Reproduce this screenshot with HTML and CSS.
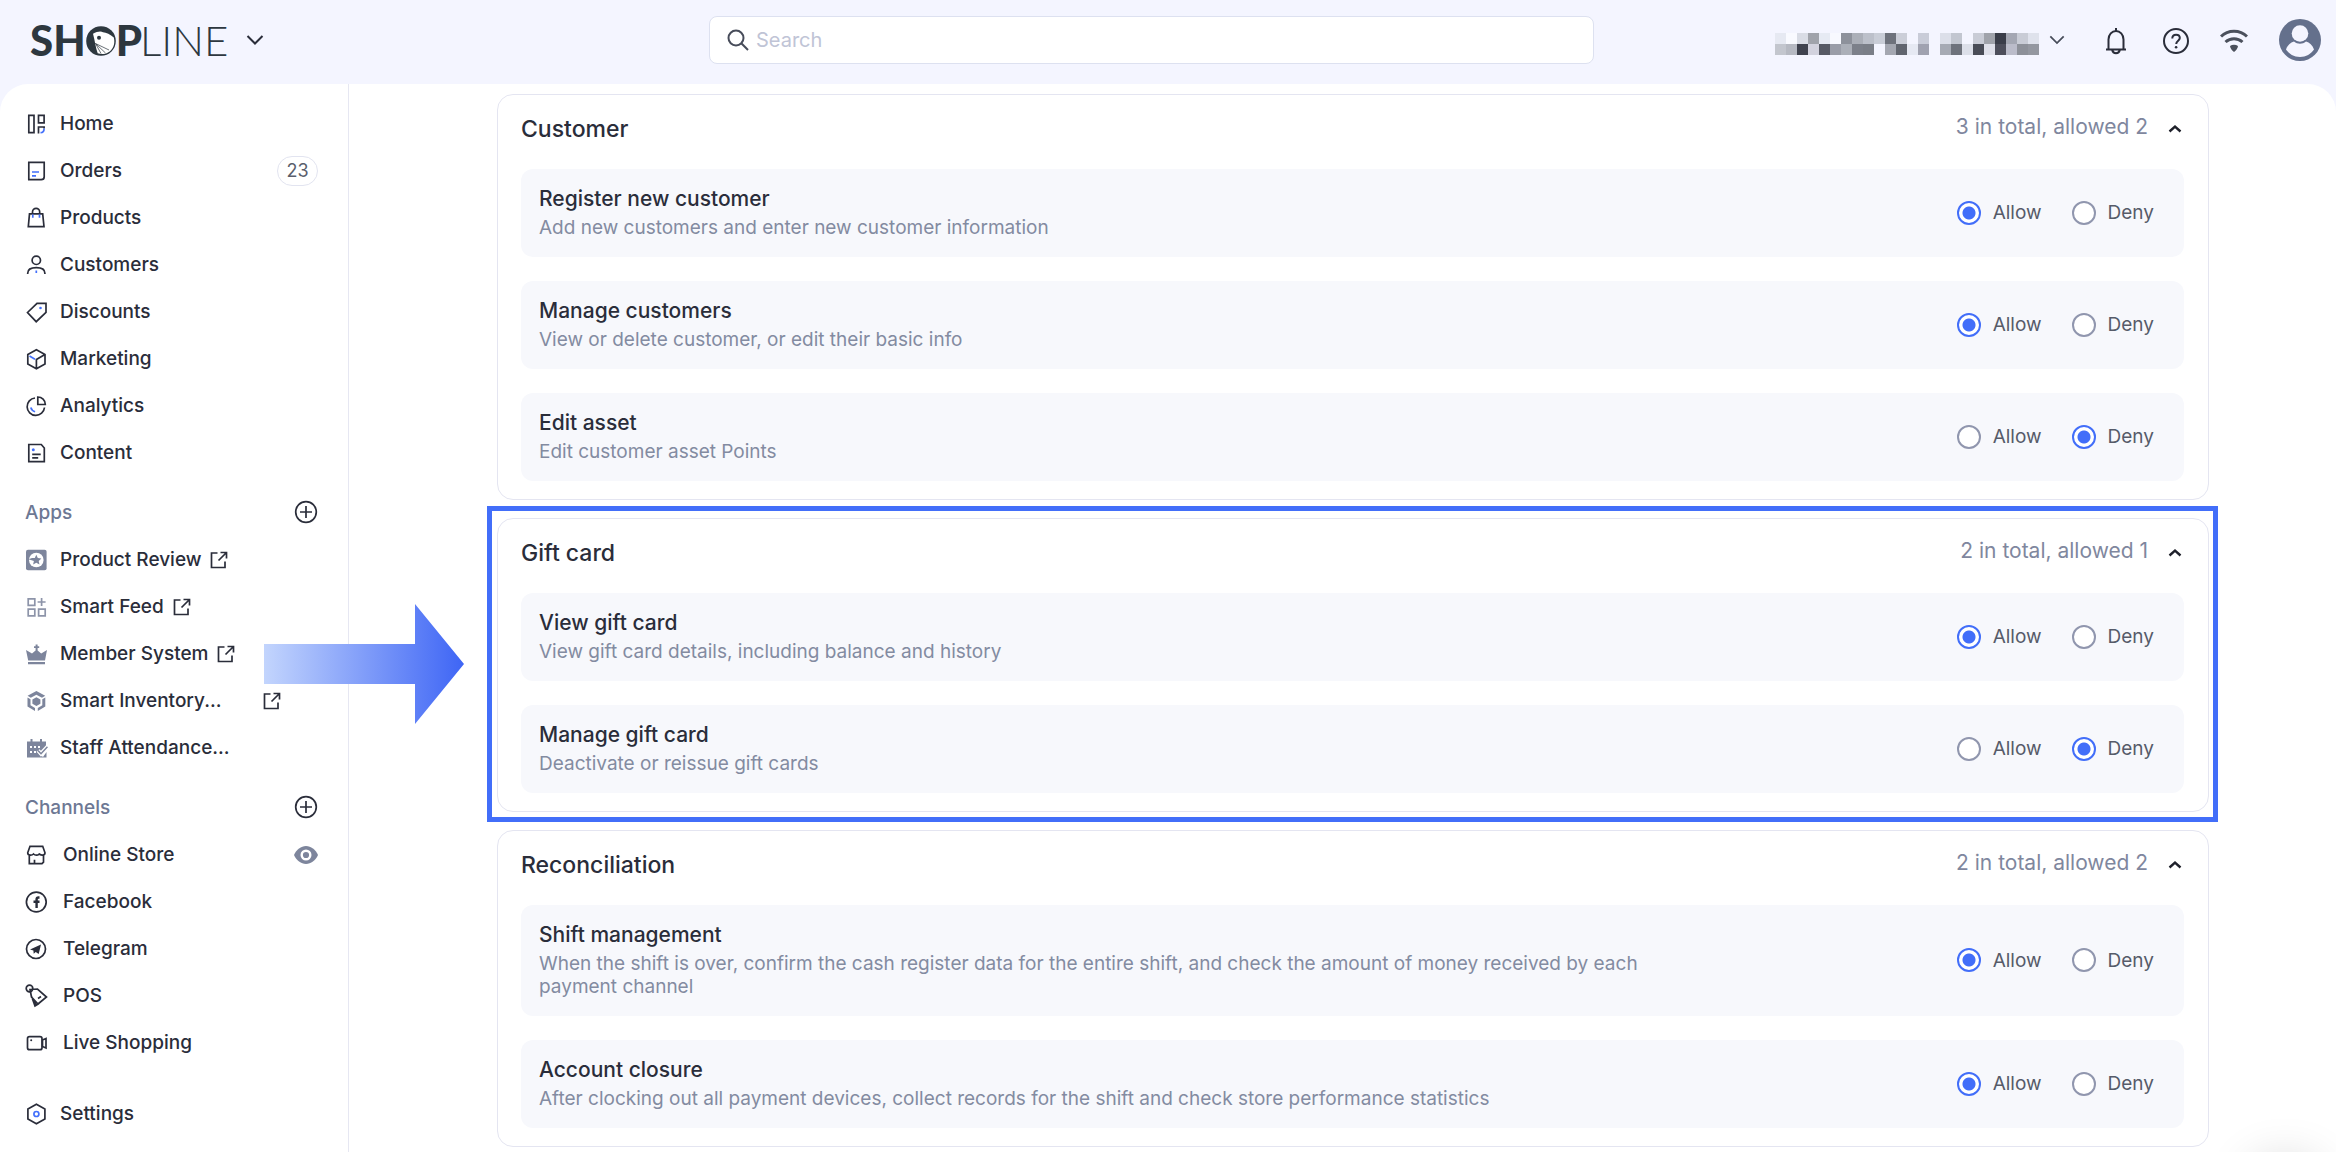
FILE: index.html
```html
<!DOCTYPE html>
<html lang="en">
<head>
    <meta charset="UTF-8">
    <meta name="viewport" content="width=device-width, initial-scale=1.0">
    <title>Staff Permissions</title>
    <link rel="stylesheet" href="styles.css">
</head>
<body>
<!-- shared icons -->
<svg class="sprite" aria-hidden="true">
    <symbol id="icon-external" viewBox="0 0 18 18">
        <path d="M7.500 2H1.500v14.500h13.500v-6M10.500 1.500h6v6M16 2L8.500 9.500"/>
    </symbol>
    <symbol id="icon-plus" viewBox="0 0 24 24">
        <circle cx="12" cy="12" r="10.300"/>
        <path d="M12 6v12M6 12h12"/>
    </symbol>
    <symbol id="icon-up" viewBox="0 0 14 10">
        <path d="M1.500 7.500L7 2.500l5.500 5"/>
    </symbol>
    <symbol id="icon-down" viewBox="0 0 18 12">
        <path d="M1.500 2L9 9.500 16.500 2"/>
    </symbol>
</svg>

<header class="topbar">
    <button class="brand" aria-label="SHOPLINE store menu">
        <span class="logo">
            <span class="logo-bold">SH</span>
            <svg class="logo-bird" viewBox="0 0 30 30">
                <circle cx="15" cy="15" r="14.800" fill="#2d373f"/>
                <path d="M7 7.800C11 5.500 15 5 17 6.300c3 .2 7.500 2.200 10.800 5.200C29.500 18 27 24 22 26.500c-3 1.700-7 2-10.300.8C9.500 21.500 9 15 7 7.800z" fill="#fff"/>
                <circle cx="13" cy="11.800" r="2" fill="#2d373f"/>
                <path d="M9.500 17.500L23 24M9.500 17.500l10 9.500M9.500 17.500l5.500 10" stroke="#2d373f" stroke-width=".7" fill="none"/>
            </svg>
            <span class="logo-bold">P</span><span class="logo-light">LINE</span>
        </span>
        <svg class="chevron" width="18" height="12"><use href="#icon-down"/></svg>
    </button>

    <div class="search">
        <svg class="search-icon" viewBox="0 0 22 22">
            <circle cx="9" cy="9" r="7.500"/>
            <path d="M14.300 14.300L21 21"/>
        </svg>
        <input type="text" placeholder="Search" aria-label="Search">
    </div>

    <div class="topbar-right">
        <button class="account" aria-label="Account">
            <svg class="mask" viewBox="0 0 24 2" preserveAspectRatio="none" shape-rendering="crispEdges" id="mask"></svg>
            <svg class="chevron" width="16" height="12" viewBox="0 0 18 12"><use href="#icon-down"/></svg>
        </button>
        <button class="icon-btn" aria-label="Notifications">
            <svg width="24" height="28" viewBox="0 0 24 28">
                <path d="M12 1v3M2 22.500h20M4.500 22V12.500C4.500 7.500 8 4 12 4s7.500 3.500 7.500 8.500V22M8.200 23c.4 2 2 3.200 3.800 3.200s3.400-1.200 3.800-3.200"/>
            </svg>
        </button>
        <button class="icon-btn" aria-label="Help">
            <svg width="28" height="28" viewBox="0 0 28 28">
                <circle cx="14" cy="14" r="12"/>
                <path d="M10.300 11.500c0-2.300 1.600-3.700 3.800-3.700s3.700 1.400 3.700 3.300c0 2.600-3.600 2.800-3.600 6"/>
                <circle class="solid" cx="14.100" cy="20.300" r="1.300"/>
            </svg>
        </button>
        <button class="icon-btn wifi" aria-label="Connection">
            <svg width="28" height="28" viewBox="0 0 28 28">
                <path d="M1 9.500C8 2.500 20 2.500 27 9.500M5.500 15c5-4.500 12-4.500 17 0"/>
                <path class="solid" d="M10 19c2.500-1.700 5.500-1.700 8 0 0 2-2 4.500-4 6-2-1.500-4-4-4-6z"/>
            </svg>
        </button>
        <button class="icon-btn avatar" aria-label="Profile">
            <svg width="42" height="42" viewBox="0 0 42 42">
                <circle cx="21" cy="21" r="21" fill="#64708c"/>
                <circle cx="21" cy="14.500" r="8.300" fill="#f4f5ff"/>
                <path d="M7 30.500c1.500-4.500 4.500-7 8-8 3.500 3 8.500 3 12 0 3.500 1 6.500 3.500 8 8-3 4.500-8 7.500-14 7.500S10 35 7 30.500z" fill="#f4f5ff"/>
            </svg>
        </button>
    </div>
</header>

<div class="layout">
    <nav class="sidebar">
        <ul class="menu">
            <li><a href="#">
                <svg class="icon" viewBox="0 0 24 24"><path d="M4.800 3.300H10v17.400H4.800zM14.500 3.300h5.600v7.500h-5.600zM14.500 21.500V15h5.600v1.500"/><path class="blue" d="M20.100 16.500c0 2.500-1.200 4.200-3.600 4.200"/></svg>
                <span>Home</span></a></li>
            <li><a href="#">
                <svg class="icon" viewBox="0 0 24 24"><path d="M4.800 3.300h15.400v14.400q0 3-3 3H4.800z"/><path class="blue" d="M8 13h7M8 16.800h4"/></svg>
                <span>Orders</span><span class="badge">23</span></a></li>
            <li><a href="#">
                <svg class="icon" viewBox="0 0 24 24"><path d="M5.500 7.800h13.200l1.300 12.900H4.300zM8.500 7.500V6a3.600 3.600 0 0 1 7.200 0v1.500"/><path class="blue" d="M8.800 8.500v3.300M15.500 8.500v3.300"/></svg>
                <span>Products</span></a></li>
            <li><a href="#">
                <svg class="icon" viewBox="0 0 24 24"><circle cx="12.300" cy="7.300" r="4.200"/><path d="M3.700 21v-.8c0-3.600 3.600-5.600 8.600-5.600s8.600 2 8.600 5.600v.8"/><path class="blue" d="M12.300 17.500v2.500"/></svg>
                <span>Customers</span></a></li>
            <li><a href="#">
                <svg class="icon" viewBox="0 0 24 24"><path d="M3.500 12.500L13 3.300h9v9L12.200 21.700z"/><circle class="blue-dot" cx="16.500" cy="8" r="1.300"/></svg>
                <span>Discounts</span></a></li>
            <li><a href="#">
                <svg class="icon" viewBox="0 0 24 24"><path d="M12.400 2.800l8.600 4.700v9.500l-8.600 4.700L3.800 17V7.500zM20.500 7.800l-8.100 4.700v9"/><path class="blue" d="M5.500 9l5.500 3.200"/></svg>
                <span>Marketing</span></a></li>
            <li><a href="#">
                <svg class="icon" viewBox="0 0 24 24"><path d="M11 4a8.700 8.700 0 1 0 9.500 9.500M13.800 3v7.500h7.500A7.500 7.500 0 0 0 13.800 3z"/><path class="blue" d="M6.800 13.500c.6 2.300 2 3.600 4.300 4.200"/></svg>
                <span>Analytics</span></a></li>
            <li><a href="#">
                <svg class="icon" viewBox="0 0 24 24"><path d="M4.800 3.500h12.500l3 3.500v13.700H4.800zM8.200 13.300h8.500M8.200 16.800h6"/><circle class="blue-dot" cx="9.300" cy="8.800" r="1.500"/></svg>
                <span>Content</span></a></li>
        </ul>

        <div class="menu-title">
            <h2>Apps</h2>
            <button class="add-btn" aria-label="Add app"><svg width="24" height="24"><use href="#icon-plus"/></svg></button>
        </div>
        <ul class="menu">
            <li><a href="#">
                <svg class="icon filled" viewBox="0 0 24 24"><rect x="2" y="1.700" width="20.600" height="20.600" rx="2"/><circle cx="12.300" cy="12" r="7.300" fill="#fff"/><path d="M12.300 6.800l1.500 3.300 3.600.4-2.700 2.400.8 3.600-3.200-1.800-3.200 1.800.8-3.600-5.400-1.600 3.500-1.200 2.800 0z"/></svg>
                <span>Product Review</span><svg class="external"><use href="#icon-external"/></svg></a></li>
            <li><a href="#">
                <svg class="icon outline-grey" viewBox="0 0 24 24"><path d="M4.200 3.800h6.600v6.600H4.200zM4.200 14.200h6.600v6.600H4.200zM14.600 14.200h6.600v6.600h-6.600zM17.600 3v8M13.600 7h8"/></svg>
                <span>Smart Feed</span><svg class="external"><use href="#icon-external"/></svg></a></li>
            <li><a href="#">
                <svg class="icon filled" viewBox="0 0 24 24"><path d="M2 8l6 3.500 3.600-3V6H10V4.300h1.600V2.500h2v1.800h1.600V6h-1.600v2.500l3.600 3L23 8l-2 10.500H4.200zM4 20h17v2.200H4z"/></svg>
                <span>Member System</span><svg class="external"><use href="#icon-external"/></svg></a></li>
            <li><a href="#">
                <svg class="icon filled" viewBox="0 0 24 24"><path d="M12.400 2l8.800 4.800-3.200 2-5.600-3-5.600 3-3.200-2zM3.500 8.500l3 1.800v6l4.500 2.800v3L3.500 17.500zM21.300 8.500l-3 1.800v6l-4.500 2.800v3l7.500-4.600zM12.400 8.300l4 2.200v4.200l-4 2.300-4-2.300v-4.200z"/></svg>
                <span class="cut">Smart Inventory...</span><svg class="external"><use href="#icon-external"/></svg></a></li>
            <li><a href="#">
                <svg class="icon filled" viewBox="0 0 24 24"><path d="M3 5.500h3.500V3h2v2.500h7.500V3h2v2.500h4v6l-6.500 7-3-3 6.500 5.500 3.500-5v5.500H3z"/><path d="M14 14.500l3 3.200 6.500-7" fill="none" stroke="#fff" stroke-width="4"/><path d="M14 14.500l3 3.200 6.500-7" fill="none" stroke="#7d859c" stroke-width="1.600"/><path d="M6 11h2M10 11h2M14 11h2M6 16h2M10 16h2" stroke="#fff" stroke-width="2"/></svg>
                <span class="cut">Staff Attendance...</span></a></li>
        </ul>

        <div class="menu-title">
            <h2>Channels</h2>
            <button class="add-btn" aria-label="Add channel"><svg width="24" height="24"><use href="#icon-plus"/></svg></button>
        </div>
        <ul class="menu channels">
            <li><a href="#">
                <svg class="icon" viewBox="0 0 24 24"><path d="M6 3.300h12.700l2.300 6.500c0 1.500-1.200 2.400-2.800 2.400s-2.300-.8-2.900-1.200c-.6.500-1.400 1.200-2.900 1.200s-2.400-.7-2.900-1.200c-.5.500-1.400 1.200-2.900 1.200s-2.900-1-2.900-2.400zM5.300 12.500v8.200H18l1.500-1.500v-7M10.500 20.500v-3.800"/></svg>
                <span>Online Store</span>
                <svg class="eye" viewBox="0 0 24 18"><path d="M12 0c5 0 9.500 3.500 12 9-2.500 5.500-7 9-12 9S2.500 14.500 0 9c2.500-5.500 7-9 12-9z" fill="#7d859c"/><circle cx="12" cy="9" r="4.300" fill="#7d859c" stroke="#fff" stroke-width="2.400"/></svg></a></li>
            <li><a href="#">
                <svg class="icon" viewBox="0 0 24 24"><circle cx="12.300" cy="12" r="9.900"/><path d="M15.500 7.500h-1c-1.300 0-1.900.7-1.900 2V18M9.500 11.800h6" stroke-width="2.400"/></svg>
                <span>Facebook</span></a></li>
            <li><a href="#">
                <svg class="icon" viewBox="0 0 24 24"><circle cx="12" cy="12" r="9.500"/><path class="solid" d="M6 12.500l11-5-2.300 9.500-3-2-2 1.800-.3-3.300z"/></svg>
                <span>Telegram</span></a></li>
            <li><a href="#">
                <svg class="icon" viewBox="0 0 24 24"><circle cx="5.500" cy="4.500" r="3.300"/><path d="M6 5.500l7.500-.5L22.500 13 14 20l-6.500-7zM7.800 13L11 22l4-2.500M9.500 15.500l2.500 5.500M14 14.500l3-2"/></svg>
                <span>POS</span></a></li>
            <li><a href="#">
                <svg class="icon" viewBox="0 0 24 24"><rect x="3.500" y="5.700" width="14.500" height="13" rx="2"/><path d="M18.500 9l3.500-1.500v9.500l-3.500-1.500z"/><circle class="solid" cx="7.200" cy="9.300" r="1"/></svg>
                <span>Live Shopping</span></a></li>
        </ul>

        <ul class="menu settings">
            <li><a href="#">
                <svg class="icon" viewBox="0 0 24 24"><path d="M12.400 2.300l8.500 4.800v9.800l-8.500 4.800-8.500-4.800V7.100z"/><circle class="blue" cx="12.400" cy="12" r="2.500"/></svg>
                <span>Settings</span></a></li>
        </ul>
    </nav>

    <main class="content">
        <section class="card">
            <div class="card-header">
                <h3>Customer</h3>
                <div class="card-count"><span>3 in total, allowed 2</span><button class="toggle" aria-label="Collapse Customer"><svg width="14" height="10"><use href="#icon-up"/></svg></button></div>
            </div>
            <div class="permission">
                <div class="permission-text">
                    <h4>Register new customer</h4>
                    <p>Add new customers and enter new customer information</p>
                </div>
                <div class="choices">
                    <label><input type="radio" name="registerCustomer" checked>Allow</label>
                    <label><input type="radio" name="registerCustomer">Deny</label>
                </div>
            </div>
            <div class="permission">
                <div class="permission-text">
                    <h4>Manage customers</h4>
                    <p>View or delete customer, or edit their basic info</p>
                </div>
                <div class="choices">
                    <label><input type="radio" name="manageCustomers" checked>Allow</label>
                    <label><input type="radio" name="manageCustomers">Deny</label>
                </div>
            </div>
            <div class="permission">
                <div class="permission-text">
                    <h4>Edit asset</h4>
                    <p>Edit customer asset Points</p>
                </div>
                <div class="choices">
                    <label><input type="radio" name="editAsset">Allow</label>
                    <label><input type="radio" name="editAsset" checked>Deny</label>
                </div>
            </div>
        </section>

        <section class="card highlighted">
            <svg class="arrow" viewBox="0 0 200 120" aria-hidden="true">
                <defs>
                    <linearGradient id="arrowFill">
                        <stop offset="0" stop-color="#c3d5fd"/>
                        <stop offset="1" stop-color="#3e65f5"/>
                    </linearGradient>
                </defs>
                <path d="M0 40h151V0l49 60-49 60V80H0z" fill="url(#arrowFill)"/>
            </svg>
            <div class="card-header">
                <h3>Gift card</h3>
                <div class="card-count"><span>2 in total, allowed 1</span><button class="toggle" aria-label="Collapse Gift card"><svg width="14" height="10"><use href="#icon-up"/></svg></button></div>
            </div>
            <div class="permission">
                <div class="permission-text">
                    <h4>View gift card</h4>
                    <p>View gift card details, including balance and history</p>
                </div>
                <div class="choices">
                    <label><input type="radio" name="viewGiftCard" checked>Allow</label>
                    <label><input type="radio" name="viewGiftCard">Deny</label>
                </div>
            </div>
            <div class="permission">
                <div class="permission-text">
                    <h4>Manage gift card</h4>
                    <p>Deactivate or reissue gift cards</p>
                </div>
                <div class="choices">
                    <label><input type="radio" name="manageGiftCard">Allow</label>
                    <label><input type="radio" name="manageGiftCard" checked>Deny</label>
                </div>
            </div>
        </section>

        <section class="card">
            <div class="card-header">
                <h3>Reconciliation</h3>
                <div class="card-count"><span>2 in total, allowed 2</span><button class="toggle" aria-label="Collapse Reconciliation"><svg width="14" height="10"><use href="#icon-up"/></svg></button></div>
            </div>
            <div class="permission">
                <div class="permission-text">
                    <h4>Shift management</h4>
                    <p>When the shift is over, confirm the cash register data for the entire shift, and check the amount of money received by each payment channel</p>
                </div>
                <div class="choices">
                    <label><input type="radio" name="shiftManagement" checked>Allow</label>
                    <label><input type="radio" name="shiftManagement">Deny</label>
                </div>
            </div>
            <div class="permission">
                <div class="permission-text">
                    <h4>Account closure</h4>
                    <p>After clocking out all payment devices, collect records for the shift and check store performance statistics</p>
                </div>
                <div class="choices">
                    <label><input type="radio" name="accountClosure" checked>Allow</label>
                    <label><input type="radio" name="accountClosure">Deny</label>
                </div>
            </div>
        </section>
    </main>
</div>

<div class="float-shadow"></div>

<script>
    // blurred-out account name, one colour per block, '' leaves a gap
    var rows = [
        ['e6e9f2', 'f9faff', 'd9dce5', 'a0a3ab', 'e6eaf3', 'f8f9ff', '8d919b', 'abafb8', 'bcc0ca', 'c9cdd7', '6e727c', 'cbced8',
         '', 'c9ccd8', '', 'dcdfe9', 'c2c6d0', '', 'c9ccd6', 'a0a3ab', '3a3d49', 'a4a7b3', 'c9ccd6', 'dfe2ec'],
        ['c3c6ce', 'b6b9c2', '3f424e', 'd2d2de', '575a65', '9a9da8', 'abafb8', '7c808a', '7a7e87', '', 'a4a7b1', '61656f',
         'e6e9f3', 'a0a2b0', '', 'a6aab4', '6e727c', 'dcdfe9', '494c57', 'dfe0ea', '4d4e5b', 'bbbcca', '8d9099', '9497a0']
    ];
    var mask = document.getElementById('mask');

    rows.forEach(function (row, y) {
        row.forEach(function (color, x) {
            if (!color) {
                return;
            }
            var rect = document.createElementNS('http://www.w3.org/2000/svg', 'rect');
            rect.setAttribute('x', x);
            rect.setAttribute('y', y);
            rect.setAttribute('width', 1);
            rect.setAttribute('height', 1);
            rect.setAttribute('fill', '#' + color);
            mask.appendChild(rect);
        });
    });
</script>
</body>
</html>
```
FILE: styles.css
```css
* {
    box-sizing: border-box;
}

body {
    font-family: 'Inter', 'Liberation Sans', sans-serif;
    font-size: 19px;
    margin: 0;
    height: 100vh;
    overflow: hidden;
    display: flex;
    flex-direction: column;
    background-color: #f4f5ff;
    color: #2a2d3a;
}

h2, h3, h4, p, ul {
    margin: 0;
    padding: 0;
    font-weight: 500;
}

ul {
    list-style: none;
}

button {
    display: flex;
    align-items: center;
    padding: 0;
    border: none;
    background: none;
    font-family: inherit;
    color: inherit;
    cursor: pointer;
}

svg {
    display: block;
    flex-shrink: 0;
    fill: none;
    stroke-width: 1.7;
}

.sprite {
    position: absolute;
    width: 0;
    height: 0;
}

/* top bar */
.topbar {
    display: grid;
    grid-template-columns: 679px minmax(0, 885px) 1fr;
    align-items: center;
    height: 84px;
    padding: 0 15px 4px 30px;
    flex-shrink: 0;
}

.brand {
    justify-self: start;
    gap: 18px;
}

.logo {
    display: flex;
    align-items: center;
    font-family: 'Lato', 'Liberation Sans', sans-serif;
    font-size: 42px;
    line-height: 48px;
    color: #2d373f;
}

.logo-bold {
    font-weight: 900;
}

.logo-light {
    font-weight: 300;
    margin-left: -2px;
}

.logo-bird {
    width: 30px;
    height: 30px;
    margin-top: 1px;
}

.chevron {
    stroke: #2a2d3a;
    stroke-width: 2;
}

.search {
    position: relative;
}

.search-icon {
    position: absolute;
    top: 13px;
    left: 18px;
    width: 22px;
    height: 22px;
    stroke: #474c5a;
    stroke-width: 2;
}

.search input {
    display: block;
    width: 100%;
    height: 48px;
    padding: 0 16px 0 46px;
    border: 1px solid #dde1f0;
    border-radius: 8px;
    background-color: #fff;
    font-family: inherit;
    font-size: 20px;
}

.search input::placeholder {
    color: #c0c4d6;
}

.topbar-right {
    display: flex;
    align-items: center;
    justify-content: flex-end;
}

.account {
    gap: 10px;
    margin-right: 39px;
}

.account .chevron {
    stroke: #474c5a;
}

.mask {
    width: 264px;
    height: 22px;
    margin-top: 8px;
}

.icon-btn {
    margin-right: 34px;
}

.icon-btn svg {
    margin-top: 2px;
    stroke: #2a2d3a;
    stroke-width: 2;
}

.icon-btn .solid {
    fill: #2a2d3a;
    stroke: none;
}

.wifi {
    margin-left: -4px;
    margin-right: 31px;
}

.wifi svg {
    stroke: #4b505c;
    stroke-width: 3;
}

.wifi .solid {
    fill: #4b505c;
}

.avatar {
    margin-right: 0;
}

.avatar svg {
    margin-top: 0;
    stroke: none;
}

/* layout */
.layout {
    display: flex;
    flex: 1;
    min-height: 0;
    background-color: #fff;
    border-radius: 28px 28px 0 0;
    overflow: hidden;
}

.sidebar {
    width: 349px;
    flex-shrink: 0;
    padding-top: 16px;
    border-right: 1px solid #e6e7f2;
}

.menu a {
    display: flex;
    align-items: center;
    height: 47px;
    padding: 0 30px 0 24px;
    color: #2a2d3a;
    font-weight: 500;
    text-decoration: none;
}

.icon {
    width: 24px;
    height: 24px;
    margin-right: 12px;
    stroke: #2a2d3a;
}

.icon .blue {
    stroke: #4370fb;
}

.icon .blue-dot {
    fill: #4370fb;
    stroke: none;
}

.icon .solid {
    fill: #2a2d3a;
    stroke: none;
}

.filled {
    fill: #7d859c;
    stroke: none;
}

.outline-grey {
    stroke: #8d94a9;
}

.channels .icon {
    margin-right: 15px;
}

.badge {
    margin-left: auto;
    width: 41px;
    height: 30px;
    border: 1px solid #e2e4f0;
    border-radius: 15px;
    font-size: 18px;
    font-weight: 400;
    line-height: 28px;
    text-align: center;
    color: #5a5f6d;
}

.external {
    width: 18px;
    height: 18px;
    margin-left: 9px;
    stroke: #2a2d3a;
}

.cut {
    width: 194px;
}

.eye {
    width: 24px;
    height: 18px;
    margin-left: auto;
}

.menu-title {
    display: flex;
    align-items: center;
    justify-content: space-between;
    height: 48px;
    margin-top: 12px;
    padding: 0 30px 0 25px;
}

.menu-title h2 {
    font-size: 19px;
    color: #6d7894;
}

.add-btn svg {
    stroke: #2a2d3a;
}

.settings {
    margin-top: 24px;
}

/* permission cards */
.content {
    flex: 1;
    min-width: 0;
    display: flex;
    flex-direction: column;
    gap: 18px;
    padding: 10px 127px 5px 148px;
}

.card {
    position: relative;
    display: flex;
    flex-direction: column;
    gap: 24px;
    padding: 0 24px 18px 23px;
    border: 1px solid #e4e5f1;
    border-radius: 16px;
}

.highlighted::after {
    content: '';
    position: absolute;
    inset: -13px -10px -11px -11px;
    border: 5px solid #426ef9;
    pointer-events: none;
}

.arrow {
    position: absolute;
    top: 85px;
    left: -234px;
    width: 200px;
    height: 120px;
}

.card-header {
    display: flex;
    align-items: center;
    justify-content: space-between;
    height: 74px;
    margin-bottom: -24px;
    padding-bottom: 6px;
}

.card-header h3 {
    font-size: 23px;
}

.card-count {
    display: flex;
    align-items: center;
    gap: 20px;
    padding-right: 2px;
    font-size: 21px;
    color: #7f879e;
}

.card-count span {
    padding-bottom: 5px;
}

.toggle svg {
    stroke: #1f212b;
    stroke-width: 2.4;
}

.permission {
    display: flex;
    align-items: center;
    justify-content: space-between;
    padding: 17px 30px 18px 18px;
    border-radius: 12px;
    background-color: #f7f8fc;
}

.permission-text {
    width: 71%;
}

.permission-text h4 {
    margin-bottom: 4px;
    font-size: 21px;
    line-height: 26px;
}

.permission-text p {
    font-size: 19px;
    font-weight: 400;
    line-height: 23px;
    color: #838ba1;
}

.choices {
    display: flex;
    gap: 30px;
}

.choices label {
    display: flex;
    align-items: center;
    gap: 12px;
    color: #565b69;
    cursor: pointer;
}

.choices input {
    appearance: none;
    width: 24px;
    height: 24px;
    margin: 0;
    border: 2px solid #9096ae;
    border-radius: 50%;
    background-color: #fff;
}

.choices input:checked {
    border-color: #426ef9;
    background-image: radial-gradient(circle, #426ef9 6px, #fff 7px);
}

.float-shadow {
    position: fixed;
    right: 16px;
    bottom: -70px;
    width: 70px;
    height: 60px;
    border-radius: 50%;
    box-shadow: 0 0 50px rgba(0, 0, 0, 0.2);
}
```
